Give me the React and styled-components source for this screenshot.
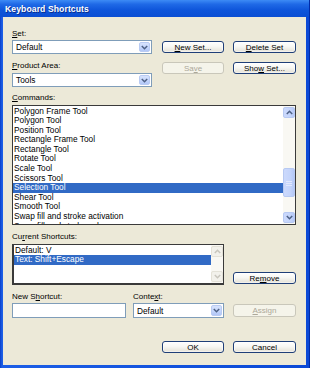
import React from "react";
import styled, { createGlobalStyle, css } from "styled-components";

const GlobalStyle = createGlobalStyle`
  html, body { margin: 0; padding: 0; background: #ECE9D8; }
  body { font-family: "Liberation Sans", Arial, sans-serif; font-size: 8px; color: #000; }
  * { box-sizing: border-box; }
`;

const Window = styled.div`
  width: 310px;
  height: 368px;
  display: flex;
  flex-direction: column;
  background: linear-gradient(90deg, #0A3FC8 0px, #1C5EE6 2px, #0B49D6 100%);
  border-right: 1px solid #002BA8;
`;

const TitleBar = styled.div`
  height: 17px;
  flex: none;
  display: flex;
  align-items: center;
  padding-left: 5px;
  background: linear-gradient(180deg, #3D8BF5 0%, #1F69E6 25%, #0E55DA 60%, #0A4ED3 100%);
  color: #fff;
  font-weight: bold;
  font-size: 8.6px;
  letter-spacing: 0.1px;
  text-shadow: 1px 1px 0 #0A2E8C;
`;

const Body = styled.div`
  flex: 1;
  margin: 0 3px 3px 3px;
  background: #ECE9D8;
  padding: 0 10px 0 9px;
  display: flex;
  flex-direction: column;
`;

const TopRow = styled.div`
  display: flex;
  gap: 10px;
`;

const LeftCol = styled.div`
  width: 140px;
  display: flex;
  flex-direction: column;
`;

const ButtonGrid = styled.div`
  display: grid;
  grid-template-columns: 62px 63px;
  column-gap: 9px;
  row-gap: 9px;
  margin-top: 24px;
  align-content: start;
`;

const Label = styled.div`
  height: 11px;
  line-height: 11px;
  white-space: nowrap;
  margin-top: ${(p) => p.$mt ?? 0}px;
  margin-left: ${(p) => p.$ml ?? 0}px;
  u { text-decoration: underline; text-underline-offset: 1px; }
`;

const Button = styled.div`
  height: ${(p) => p.$h ?? 12}px;
  width: ${(p) => p.$w ?? 62}px;
  flex: none;
  border-radius: 3px;
  display: flex;
  align-items: center;
  justify-content: center;
  font-size: 8px;
  white-space: nowrap;
  ${(p) =>
    p.$disabled
      ? css`
          border: 1px solid #C9C7BA;
          background: #F5F4EA;
          color: #ACA899;
        `
      : css`
          border: 1px solid #1F3F78;
          background: linear-gradient(180deg, #FFFFFF 0%, #F7F7F3 45%, #E9E7DE 85%, #D8D3C7 100%);
          color: #000;
          box-shadow: inset 0 0 0 1px #FFFFFF99;
        `}
  margin-top: ${(p) => p.$mt ?? 0}px;
  margin-bottom: ${(p) => p.$mb ?? 0}px;
  u { text-decoration: underline; text-underline-offset: 1px; }
`;

const Combo = styled.div`
  width: ${(p) => p.$w}px;
  height: ${(p) => p.$h ?? 14}px;
  margin-top: ${(p) => p.$mt ?? 0}px;
  border: 1px solid #7F9DB9;
  background: #fff;
  display: flex;
  align-items: stretch;
  flex: none;
`;

const ComboText = styled.div`
  flex: 1;
  display: flex;
  align-items: center;
  padding-left: 3px;
  font-size: 8.3px;
`;

const DropButton = styled.div`
  width: 11px;
  margin: 1px;
  border-radius: 2px;
  border: 1px solid #B9CBF3;
  background: linear-gradient(180deg, #D7E3FD 0%, #C2D4FB 60%, #B2C7F7 100%);
  display: flex;
  align-items: center;
  justify-content: center;
`;

const ListBox = styled.div`
  width: ${(p) => p.$w}px;
  height: ${(p) => p.$h}px;
  margin-top: ${(p) => p.$mt ?? 0}px;
  border: 1px solid #3A3A3A;
  ${(p) => p.$thick && css`
    border-left-width: 2px;
    border-bottom-width: 2px;
  `}
  background: #fff;
  display: flex;
  flex: none;
`;

const ListItems = styled.div`
  flex: 1;
  overflow: hidden;
  padding-top: 0.5px;
`;

const Item = styled.div`
  height: 9.6px;
  line-height: 9.6px;
  padding-left: 1px;
  white-space: nowrap;
  font-size: 8.3px;
  ${(p) => p.$selected && css`
    background: #316AC5;
    color: #fff;
  `}
`;

const ScrollBar = styled.div`
  width: 12px;
  flex: none;
  display: flex;
  flex-direction: column;
  background: #F9F8F3;
  padding: 1px 0 1px 0;
`;

const ArrowBtn = styled.div`
  height: 11px;
  flex: none;
  border-radius: 2px;
  border: 1px solid ${(p) => (p.$disabled ? "#E4E2D8" : "#B7C9F2")};
  background: ${(p) =>
    p.$disabled
      ? "#F2F1EB"
      : "linear-gradient(90deg, #CBD9FC 0%, #C4D4FB 60%, #B5C8F6 100%)"};
  display: flex;
  align-items: center;
  justify-content: center;
`;

const Track = styled.div`
  flex: 1;
  display: flex;
  flex-direction: column;
`;

const Thumb = styled.div`
  height: 29px;
  margin-top: ${(p) => p.$top}px;
  border-radius: 2px;
  border: 1px solid #B7C9F2;
  background: linear-gradient(90deg, #CBD9FC 0%, #C4D4FB 60%, #B5C8F6 100%);
  display: flex;
  align-items: center;
  justify-content: center;
`;

const Row = styled.div`
  display: flex;
  align-items: ${(p) => p.$align ?? "flex-start"};
  gap: ${(p) => p.$gap ?? 0}px;
  justify-content: ${(p) => p.$justify ?? "flex-start"};
  margin-top: ${(p) => p.$mt ?? 0}px;
`;

const Field = styled.div`
  display: flex;
  flex-direction: column;
  width: ${(p) => p.$w}px;
  margin-left: ${(p) => p.$ml ?? 0}px;
`;

const TextInput = styled.div`
  height: 15px;
  margin-top: 1px;
  border: 1px solid #7F9DB9;
  background: #fff;
`;

const Chevron = ({ up, color = "#4D6185" }) => (
  <svg width="7" height="5" viewBox="0 0 7 5">
    <path
      d={up ? "M0.8 4 L3.5 1.3 L6.2 4" : "M0.8 1 L3.5 3.7 L6.2 1"}
      fill="none"
      stroke={color}
      strokeWidth="1.5"
    />
  </svg>
);

const Grip = () => (
  <svg width="6" height="6" viewBox="0 0 6 6">
    <path d="M0 1.5 H6 M0 3.5 H6 M0 5.5 H6" stroke="#E8EEFE" strokeWidth="0.8" />
  </svg>
);

const ComboBox = ({ w, h, mt, value }) => (
  <Combo $w={w} $h={h} $mt={mt}>
    <ComboText>{value}</ComboText>
    <DropButton>
      <Chevron />
    </DropButton>
  </Combo>
);

const commands = [
  "Polygon Frame Tool",
  "Polygon Tool",
  "Position Tool",
  "Rectangle Frame Tool",
  "Rectangle Tool",
  "Rotate Tool",
  "Scale Tool",
  "Scissors Tool",
  "Selection Tool",
  "Shear Tool",
  "Smooth Tool",
  "Swap fill and stroke activation",
  "Swap fill and stroke colors",
];

export default function App() {
  return (
    <>
      <GlobalStyle />
      <Window>
        <TitleBar>Keyboard Shortcuts</TitleBar>
        <Body>
          <TopRow>
            <LeftCol>
              <Label $mt={11}>
                <u>S</u>et:
              </Label>
              <ComboBox w={140} mt={1} value="Default" />
              <Label $mt={6}>
                <u>P</u>roduct Area:
              </Label>
              <ComboBox w={140} mt={2} value="Tools" />
            </LeftCol>
            <ButtonGrid>
              <Button $w={62}>
                <u>N</u>ew Set...
              </Button>
              <Button $w={63}>
                <u>D</u>elete Set
              </Button>
              <Button $w={62} $disabled>
                Sa<u>v</u>e
              </Button>
              <Button $w={63}>
                Sho<u>w</u>&nbsp;Set...
              </Button>
            </ButtonGrid>
          </TopRow>

          <Label $mt={5}>
            <u>C</u>ommands:
          </Label>
          <ListBox $w={284} $h={120} $mt={2}>
            <ListItems>
              {commands.map((c) => (
                <Item key={c} $selected={c === "Selection Tool"}>
                  {c}
                </Item>
              ))}
            </ListItems>
            <ScrollBar>
              <ArrowBtn>
                <Chevron up />
              </ArrowBtn>
              <Track>
                <Thumb $top={50}>
                  <Grip />
                </Thumb>
              </Track>
              <ArrowBtn>
                <Chevron />
              </ArrowBtn>
            </ScrollBar>
          </ListBox>

          <Label $mt={6}>
            Cu<u>r</u>rent Shortcuts:
          </Label>
          <Row $align="flex-end" $gap={9}>
            <ListBox $w={212} $h={41} $mt={2} $thick>
              <ListItems>
                <Item>Default: V</Item>
                <Item $selected>Text: Shift+Escape</Item>
              </ListItems>
              <ScrollBar>
                <ArrowBtn $disabled>
                  <Chevron up color="#C8C6BD" />
                </ArrowBtn>
                <Track />
                <ArrowBtn $disabled>
                  <Chevron color="#C8C6BD" />
                </ArrowBtn>
              </ScrollBar>
            </ListBox>
            <Button $w={63} $mb={1}>
              Re<u>m</u>ove
            </Button>
          </Row>

          <Row $mt={6} $align="flex-end">
            <Field $w={114}>
              <Label>
                New S<u>h</u>ortcut:
              </Label>
              <TextInput />
            </Field>
            <Field $w={91} $ml={7}>
              <Label>
                Conte<u>x</u>t:
              </Label>
              <ComboBox w={91} h={15} mt={1} value="Default" />
            </Field>
            <Button $w={63} $h={13} $mb={1} $disabled style={{ marginLeft: 9 }}>
              <u>A</u>ssign
            </Button>
          </Row>

          <Row $mt={23} $justify="flex-end" $gap={9}>
            <Button $w={62}>OK</Button>
            <Button $w={63}>Cancel</Button>
          </Row>
        </Body>
      </Window>
    </>
  );
}
